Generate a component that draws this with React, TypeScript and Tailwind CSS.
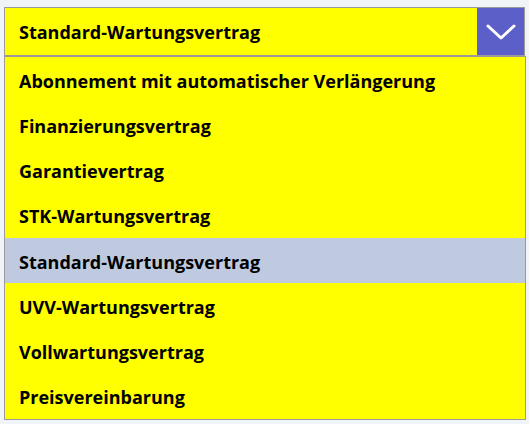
import { useState } from 'react'

const OPTIONS = [
  'Abonnement mit automatischer Verlängerung',
  'Finanzierungsvertrag',
  'Garantievertrag',
  'STK-Wartungsvertrag',
  'Standard-Wartungsvertrag',
  'UVV-Wartungsvertrag',
  'Vollwartungsvertrag',
  'Preisvereinbarung',
]

export default function App() {
  const [selected, setSelected] = useState('Standard-Wartungsvertrag')

  return (
    <div
      className="min-h-[424px] w-[529px] bg-[#f0f3f8] px-1 pt-[7px] text-black"
      style={{ fontFamily: '"Open Sans", "Noto Sans", sans-serif' }}
    >
      <div className="flex h-[49px] w-[521px] border border-[#9a9a9a] bg-[#ffff00]">
        <div className="flex flex-1 items-center pl-[14px] pt-[2px] text-[18px] font-bold">
          {selected}
        </div>
        <button className="flex w-[47px] items-center justify-center bg-[#5b5fc7]">
          <svg width="30" height="18" viewBox="0 0 30 18" fill="none">
            <path d="M2 3 L15 15 L28 3" stroke="white" strokeWidth="3" strokeLinecap="round" strokeLinejoin="round" />
          </svg>
        </button>
      </div>

      <ul className="flex w-[522px] flex-col border border-[#9a9a9a] bg-[#ffff00]">
        {OPTIONS.map((opt) => (
          <li
            key={opt}
            onClick={() => setSelected(opt)}
            className={`flex h-[45.25px] cursor-pointer items-center pl-[14px] pt-[3px] text-[18px] font-bold ${
              opt === selected ? 'bg-[#bfcae0]' : ''
            }`}
          >
            {opt}
          </li>
        ))}
      </ul>
    </div>
  )
}
